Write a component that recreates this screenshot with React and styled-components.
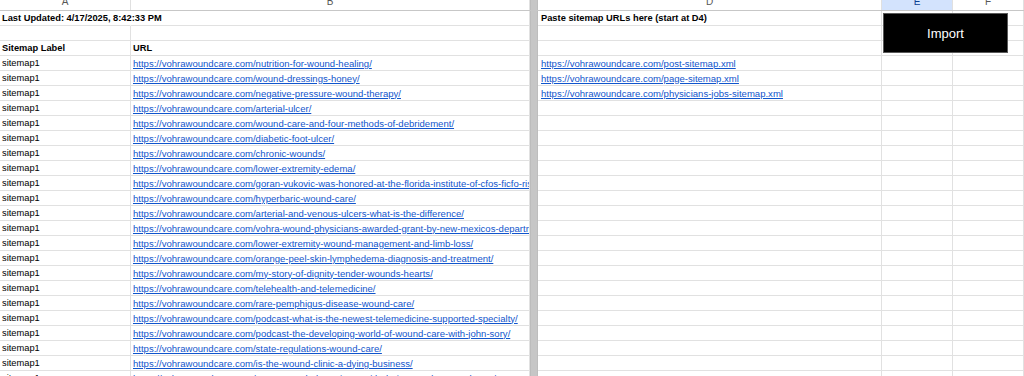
import React from "react";
import styled, { createGlobalStyle } from "styled-components";

const GlobalStyle = createGlobalStyle`
  html, body {
    margin: 0;
    padding: 0;
    background: #fff;
  }
  body {
    font-family: "Liberation Sans", Arial, sans-serif;
    overflow: hidden;
  }
`;

const COLS = "131px 399px 8px 344px 71px 1fr";

const Sheet = styled.div`
  position: relative;
  width: 1024px;
  height: 376px;
  overflow: hidden;
  background: #fff;
`;

const HeaderRow = styled.div`
  display: grid;
  grid-template-columns: ${COLS};
  height: 11px;
  border-bottom: 1px solid #c7c7c7;
  box-sizing: border-box;
`;

const HeaderCell = styled.div`
  display: flex;
  align-items: flex-end;
  justify-content: center;
  overflow: hidden;
  font-size: 10px;
  line-height: 10px;
  color: ${(p) => (p.$active ? "#0b3f91" : "#575757")};
  background: ${(p) => (p.$active ? "#d3e3fd" : "#fff")};
  border-right: 1px solid #e0e0e0;
  padding-bottom: 3px;
  box-sizing: border-box;
`;

const Row = styled.div`
  display: grid;
  grid-template-columns: ${COLS};
  height: 15px;
`;

const Cell = styled.div`
  display: flex;
  align-items: center;
  height: 15px;
  box-sizing: border-box;
  padding-left: ${(p) => p.$pad || 2}px;
  border-bottom: 1px solid #e1e1e1;
  border-right: 1px solid ${(p) => (p.$noRight ? "transparent" : "#e1e1e1")};
  font-size: 9.3px;
  font-weight: ${(p) => (p.$bold ? 700 : 400)};
  color: #000;
  white-space: nowrap;
  overflow: ${(p) => (p.$clip ? "hidden" : "visible")};
  min-width: 0;
`;

const FreezeBar = styled.div`
  background: #c6c6c6;
  border-left: 1px solid #bcbcbc;
  border-right: 1px solid #bdbdbd;
  box-sizing: border-box;
`;

const Link = styled.span`
  color: #1155cc;
  font-size: 9.55px;
  text-decoration: underline;
  text-underline-offset: 1px;
`;

const ImportButton = styled.div`
  position: absolute;
  left: 883px;
  top: 13px;
  width: 125px;
  height: 40px;
  box-sizing: border-box;
  background: #000;
  border: 1px solid #5a5a5a;
  color: #fff;
  font-size: 13px;
  display: flex;
  align-items: center;
  justify-content: center;
`;

const base = "https://vohrawoundcare.com/";

const urls = [
  "nutrition-for-wound-healing/",
  "wound-dressings-honey/",
  "negative-pressure-wound-therapy/",
  "arterial-ulcer/",
  "wound-care-and-four-methods-of-debridement/",
  "diabetic-foot-ulcer/",
  "chronic-wounds/",
  "lower-extremity-edema/",
  "goran-vukovic-was-honored-at-the-florida-institute-of-cfos-ficfo-risk-management-award/",
  "hyperbaric-wound-care/",
  "arterial-and-venous-ulcers-what-is-the-difference/",
  "vohra-wound-physicians-awarded-grant-by-new-mexicos-department-of-health/",
  "lower-extremity-wound-management-and-limb-loss/",
  "orange-peel-skin-lymphedema-diagnosis-and-treatment/",
  "my-story-of-dignity-tender-wounds-hearts/",
  "telehealth-and-telemedicine/",
  "rare-pemphigus-disease-wound-care/",
  "podcast-what-is-the-newest-telemedicine-supported-specialty/",
  "podcast-the-developing-world-of-wound-care-with-john-sory/",
  "state-regulations-wound-care/",
  "is-the-wound-clinic-a-dying-business/",
  "10-ways-to-help-patients-with-their-wound-care-at-home/",
];

const sitemaps = [
  "post-sitemap.xml",
  "page-sitemap.xml",
  "physicians-jobs-sitemap.xml",
];

const Line = ({ a, b, d, aBold, dBold, aOver }) => (
  <Row>
    <Cell $bold={aBold} $noRight={aOver}>{a}</Cell>
    <Cell $clip $bold={aBold}>{b}</Cell>
    <FreezeBar />
    <Cell $pad={3} $bold={dBold}>{d}</Cell>
    <Cell />
    <Cell />
  </Row>
);

const App = () => {
  return (
    <>
      <GlobalStyle />
      <Sheet>
        <HeaderRow>
          <HeaderCell>A</HeaderCell>
          <HeaderCell>B</HeaderCell>
          <FreezeBar />
          <HeaderCell>D</HeaderCell>
          <HeaderCell $active>E</HeaderCell>
          <HeaderCell>F</HeaderCell>
        </HeaderRow>
        <Line
          a="Last Updated: 4/17/2025, 8:42:33 PM"
          aBold
          aOver
          d="Paste sitemap URLs here (start at D4)"
          dBold
        />
        <Line />
        <Line a="Sitemap Label" b="URL" aBold />
        {urls.map((u, i) => (
          <Line
            key={u}
            a="sitemap1"
            b={<Link>{base + u}</Link>}
            d={sitemaps[i] ? <Link>{base + sitemaps[i]}</Link> : null}
          />
        ))}
        <ImportButton>Import</ImportButton>
      </Sheet>
    </>
  );
};

export default App;
